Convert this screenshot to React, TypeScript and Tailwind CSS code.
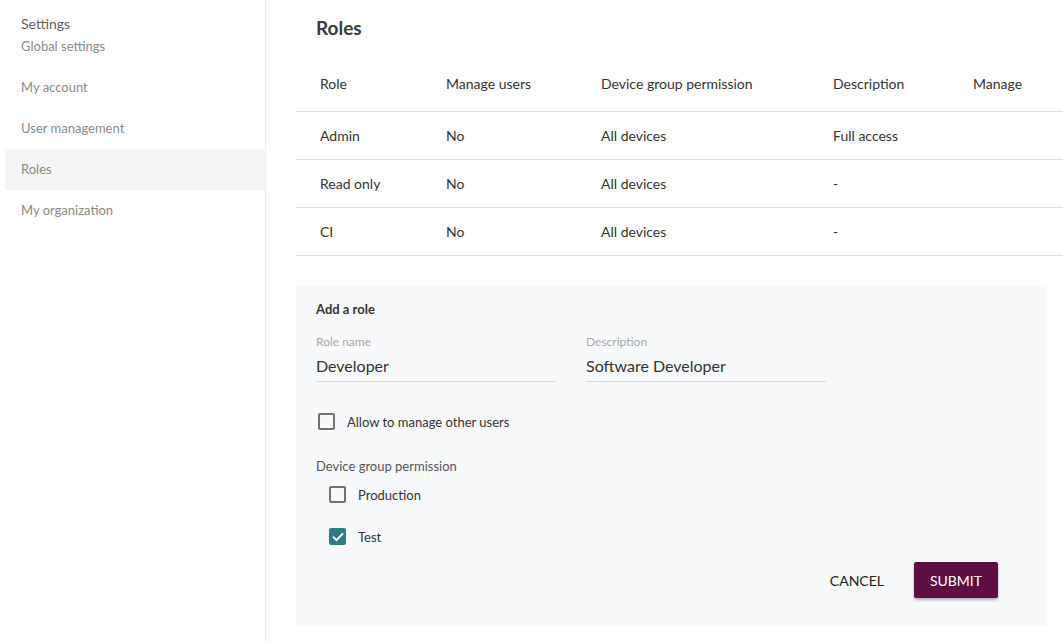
import React from 'react'

const roles = [
  { name: 'Admin', manage: 'No', group: 'All devices', description: 'Full access' },
  { name: 'Read only', manage: 'No', group: 'All devices', description: '-' },
  { name: 'CI', manage: 'No', group: 'All devices', description: '-' },
]

const navItems = ['My account', 'User management', 'Roles', 'My organization']

const cols = 'grid grid-cols-[126px_155px_232px_140px_1fr]'

function Checkbox({ checked }: { checked?: boolean }) {
  if (checked) {
    return (
      <span className="flex h-[17px] w-[17px] items-center justify-center rounded-[2px] bg-[#337a87]">
        <svg viewBox="0 0 24 24" className="h-4 w-4" fill="none" stroke="#fff" strokeWidth={3}>
          <path d="M5.5 12.5l4.2 4.2 8.8-9" strokeLinecap="square" />
        </svg>
      </span>
    )
  }
  return <span className="block h-[17px] w-[17px] rounded-[2px] border-2 border-[#707070]" />
}

function Field({ label, value }: { label: string; value: string }) {
  return (
    <div className="w-[240px]">
      <div className="text-[12px] leading-[16px] text-[#a8a8a8]">{label}</div>
      <div className="mt-[4px] border-b border-[#d9d9d9] pb-[4px] text-[16px] leading-[23px] text-[#333]">{value}</div>
    </div>
  )
}

export default function App() {
  return (
    <div className="flex h-[641px] w-[1063px] overflow-hidden bg-white font-['Lato',sans-serif] text-[#333]">
      {/* sidebar */}
      <aside className="w-[266px] shrink-0 border-r border-[#eaeeee] pt-[14px]">
        <div className="pl-[21px] text-[14px] leading-[20px] text-[#606060]">Settings</div>
        <div className="mt-[2px] pl-[21px] text-[13px] leading-[20px] text-[#8a8a8a]">Global settings</div>
        <div className="mt-[11px] ml-[5px]">
          {navItems.map(item => (
            <div
              key={item}
              className={`flex h-[41px] items-center pl-4 text-[13px] text-[#8a8a8a] ${item === 'Roles' ? 'bg-[#f5f5f5]' : ''}`}
            >
              {item}
            </div>
          ))}
        </div>
      </aside>

      {/* main */}
      <main className="flex-1 pl-[30px]">
        <h1 className="pt-[16px] pl-5 text-[19px] font-bold leading-[24px] text-[#3a3a3a]">Roles</h1>

        <div className="mt-[16px] text-[14px]">
          <div className={`${cols} h-[56px] items-center border-b border-[#dedede]`}>
            <div className="pl-6">Role</div>
            <div className="pl-6">Manage users</div>
            <div className="pl-6">Device group permission</div>
            <div className="pl-6">Description</div>
            <div className="pl-6">Manage</div>
          </div>
          {roles.map(r => (
            <div key={r.name} className={`${cols} h-[48px] items-center border-b border-[#dedede]`}>
              <div className="pl-6">{r.name}</div>
              <div className="pl-6">{r.manage}</div>
              <div className="pl-6">{r.group}</div>
              <div className="pl-6">{r.description}</div>
              <div className="pl-6" />
            </div>
          ))}
        </div>

        {/* add role form */}
        <section className="mt-[29px] mr-[16px] bg-[#f8f9fb] px-5 pt-[15px] pb-[28px]">
          <div className="text-[13px] font-bold leading-[18px] text-[#333]">Add a role</div>
          <div className="mt-[16px] flex gap-[30px]">
            <Field label="Role name" value="Developer" />
            <Field label="Description" value="Software Developer" />
          </div>

          <label className="mt-[31px] flex items-center gap-[12px] pl-[2px]">
            <Checkbox />
            <span className="text-[13px] leading-[16px]">Allow to manage other users</span>
          </label>

          <div className="mt-[28px] text-[13px] leading-[16px] text-[#555]">Device group permission</div>
          <div className="mt-[12px] flex flex-col gap-[25px] pl-[13px]">
            <label className="flex items-center gap-[12px]">
              <Checkbox />
              <span className="text-[13px] leading-[16px]">Production</span>
            </label>
            <label className="flex items-center gap-[12px]">
              <Checkbox checked />
              <span className="text-[13px] leading-[16px]">Test</span>
            </label>
          </div>

          <div className="mt-[17px] flex items-center justify-end gap-[14px] pr-[29px]">
            <button className="h-[36px] px-4 text-[14px] uppercase text-[#222]">Cancel</button>
            <button className="h-[36px] w-[84px] rounded-[2px] bg-[#5d0f43] text-[14px] uppercase text-white shadow-[0_2px_3px_rgba(0,0,0,0.3)]">
              Submit
            </button>
          </div>
        </section>
      </main>
    </div>
  )
}
